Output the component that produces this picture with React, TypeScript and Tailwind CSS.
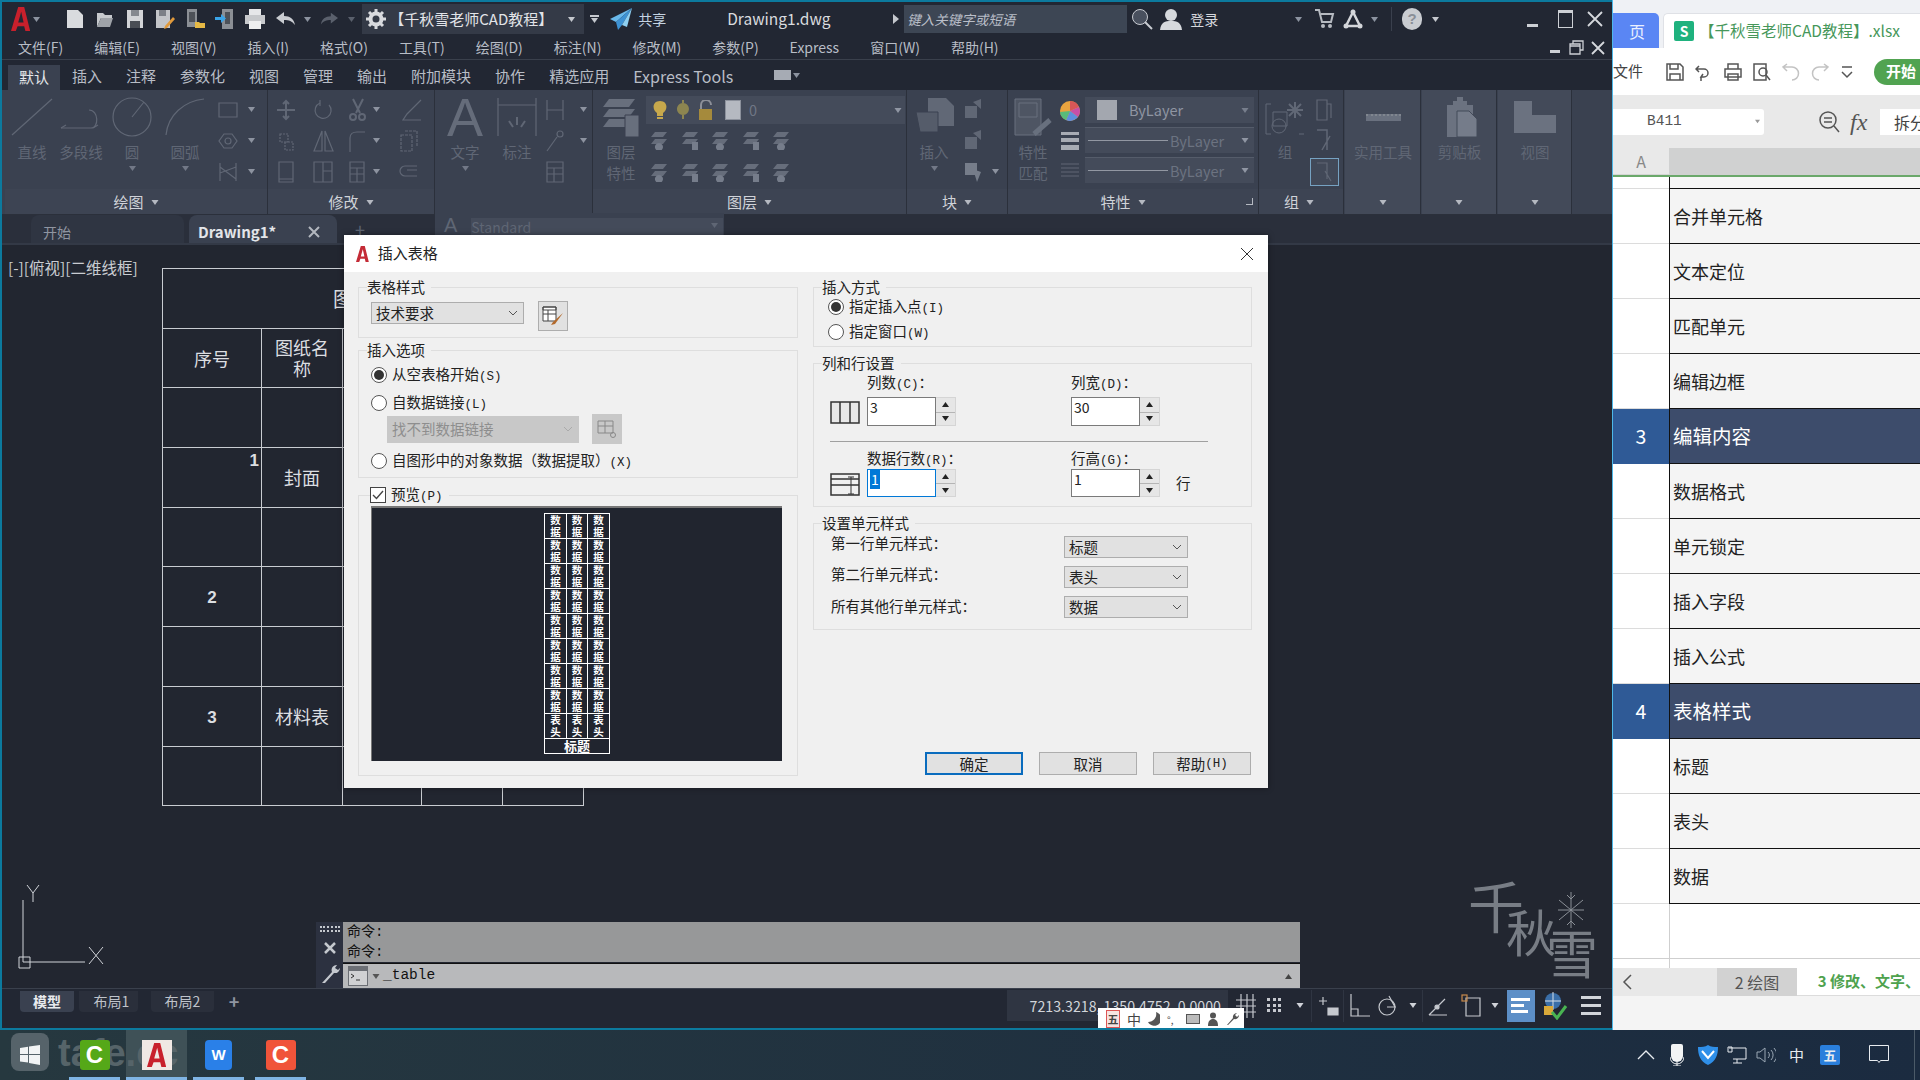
import React from 'react';

const mono = "font-['Liberation_Mono',monospace] text-[12.5px]";

// generic svg wrapper, stroke follows the parent text colour
const Ic = ({ w = 20, h = 20, sw = 1.2, fill = 'none', children }: { w?: number; h?: number; sw?: number; fill?: string; children: React.ReactNode }) => (
  <svg width={w} height={h} viewBox={`0 0 ${w} ${h}`} fill={fill} stroke="currentColor" strokeWidth={sw} className="shrink-0">
    {children}
  </svg>
);

const Tri = ({ className = 'text-[#8c93a0]' }: { className?: string }) => (
  <svg width="7" height="5" viewBox="0 0 7 5" className={`shrink-0 ${className}`}><path d="M0 0h7L3.5 5z" fill="currentColor" /></svg>
);

const AutoA = ({ size = 22, color = '#c8202c' }: { size?: number; color?: string }) => (
  <svg width={size * 0.8} height={size} viewBox="0 0 16 20">
    <path d="M6 0h5l5 20h-4l-1-4H5.500L4 20H0zM8.500 4 6 13h4.500z" fill={color} fillRule="evenodd" />
  </svg>
);

const QuickSlot = ({ children }: { children: React.ReactNode }) => (
  <span className="w-[30px] flex items-center justify-center shrink-0">{children}</span>
);

/* ---------- title bar ---------- */
const TitleBar = () => (
  <div className="h-[36px] shrink-0 flex items-center bg-[#222733] border-t-2 border-[#0c7a9e] text-[#d5d8dd] text-[14px] pl-[11px]">
    <AutoA size={24} />
    <span className="ml-[3px]"><Tri /></span>
    <div className="flex items-center ml-[20px]">
      {/* new */}
      <QuickSlot><svg width="18" height="20" viewBox="0 0 18 20"><path d="M1 1h11l5 5v13H1z" fill="#d9dbde" /></svg></QuickSlot>
      {/* open */}
      <QuickSlot><svg width="18" height="20" viewBox="0 0 18 20"><path d="M1 4h6l2 2h7v3H5l-4 9z" fill="#c6c9cd" /><path d="M5 9h12l-3 9H1z" fill="#9ea2a8" /></svg></QuickSlot>
      {/* save */}
      <QuickSlot><svg width="18" height="20" viewBox="0 0 18 20"><path d="M1 1h16v18H1z" fill="#d3d5d8" /><path d="M5 1h8v6H5z" fill="#85898f" /><path d="M4 12h10v7H4z" fill="#4a4e55" /></svg></QuickSlot>
      <QuickSlot><svg width="20" height="20" viewBox="0 0 20 20"><path d="M1 1h14v18H1z" fill="#c3c5c9" /><path d="M4 1h7v6H4z" fill="#7c8087" /><path d="M18 8l2 2-8 9-3 1 1-3z" fill="#e19a3c" /></svg></QuickSlot>
      <QuickSlot><svg width="20" height="22" viewBox="0 0 20 22"><path d="M2 1h10v18H2z" fill="#8b8f95" /><path d="M4 4h6v10H4z" fill="#4d5158" /><path d="M10 14h4l1 1h5v5H10z" fill="#e6b945" /></svg></QuickSlot>
      <QuickSlot><svg width="20" height="22" viewBox="0 0 20 22"><path d="M7 1h11v20H7z" fill="#8b8f95" /><path d="M10 4h5v12h-5z" fill="#4d5158" /><path d="M0 9h6V6l5 4.500-5 4.500v-3H0z" fill="#3aa4e8" /></svg></QuickSlot>
      <QuickSlot><svg width="22" height="22" viewBox="0 0 22 22"><path d="M5 1h12v6H5z" fill="#e6e7e9" /><path d="M1 7h20v9H1z" fill="#c7c9cc" /><path d="M5 13h12v8H5z" fill="#eeeff0" /></svg></QuickSlot>
      <svg width="20" height="14" viewBox="0 0 20 14" className="ml-[6px]"><path d="M8 0 0 6l8 6V8c5 0 8 1 11 5-1-6-5-9-11-9z" fill="#c9ccd1" /></svg>
      <span className="ml-[8px]"><Tri /></span>
      <svg width="18" height="14" viewBox="0 0 20 14" className="ml-[9px]"><path d="M12 0l8 6-8 6V8C7 8 4 9 1 13c1-6 5-9 11-9z" fill="#5a606c" /></svg>
      <span className="ml-[10px]"><Tri className="text-[#5a606c]" /></span>
    </div>
    <div className="ml-[7px] w-[222px] h-[30px] bg-[#343a47] flex items-center pl-[4px] gap-[6px] text-[#e2e4e8] text-[15px] whitespace-nowrap">
      <svg width="20" height="20" viewBox="0 0 20 20" className="shrink-0"><circle cx="10" cy="10" r="5.500" fill="none" stroke="#d8dade" strokeWidth="4" /><path d="M10 0v4M10 16v4M0 10h4M16 10h4M3 3l3 3M14 14l3 3M17 3l-3 3M6 14l-3 3" stroke="#d8dade" strokeWidth="3" /></svg>
      <span className="w-[172px] -ml-[3px]">【千秋雪老师CAD教程】</span>
      <Tri className="text-[#c5c8ce] w-[9px]" />
    </div>
    <span className="ml-[6px] flex flex-col items-center gap-[1px]"><span className="w-[9px] h-[2px] bg-[#c5c8ce]" /><Tri className="text-[#c5c8ce]" /></span>
    <svg width="22" height="24" viewBox="0 0 22 24" className="ml-[11px]"><path d="M22 1 0 12l6 3z" fill="#69b8ea" /><path d="M22 1 6 15l2 8 4-5z" fill="#3d92d4" /><path d="M22 1 12 18l5 2z" fill="#8fd0f2" /></svg>
    <span className="ml-[6px] text-[#c4d3e2] w-[30px] whitespace-nowrap">共享</span>
    <span className="ml-[59px] text-[15.500px] text-[#d9dbdf] whitespace-nowrap w-[105px]">Drawing1.dwg</span>
    <svg width="6" height="10" viewBox="0 0 6 10" className="ml-[61px] text-[#c5c8ce]"><path d="M0 0l6 5-6 5z" fill="currentColor" /></svg>
    <div className="ml-[5px] w-[223px] h-[28px] bg-[#3d4654] flex items-center pl-[3px] italic text-[#b9bec8] text-[13.500px]">键入关键字或短语</div>
    <svg width="22" height="22" viewBox="0 0 22 22" className="ml-[4px] text-[#c9ccd2]"><circle cx="9" cy="9" r="7.500" fill="#49505e" stroke="currentColor" /><path d="M14 14l7 7" stroke="currentColor" strokeWidth="2" /></svg>
    <svg width="22" height="22" viewBox="0 0 22 22" className="ml-[7px]"><circle cx="11" cy="7" r="6" fill="#d6d9dd" /><path d="M0 22c1-8 5-9 11-9s10 1 11 9z" fill="#d6d9dd" /></svg>
    <span className="ml-[8px] w-[31px] text-[#d7d9de] whitespace-nowrap">登录</span>
    <span className="ml-[74px]"><Tri /></span>
    <svg width="20" height="22" viewBox="0 0 20 22" className="ml-[13px]"><path d="M0 2h4l3 12h9l2-8H6" fill="none" stroke="#b6bac1" strokeWidth="2" /><circle cx="8" cy="18" r="2" fill="#b6bac1" /><circle cx="15" cy="18" r="2" fill="#b6bac1" /></svg>
    <svg width="22" height="22" viewBox="0 0 22 22" className="ml-[7px] text-[#d4d6da]"><path d="M11 4 4 18h14z" fill="none" stroke="currentColor" strokeWidth="2.500" /><circle cx="11" cy="4" r="2.500" fill="currentColor" /><circle cx="4" cy="18" r="2.500" fill="currentColor" /><circle cx="18" cy="18" r="2.500" fill="currentColor" /></svg>
    <span className="ml-[7px]"><Tri /></span>
    <span className="ml-[13px] w-px h-[24px] bg-[#3a404d]" />
    <span className="ml-[10px] w-[20px] h-[22px] rounded-full bg-[#c9ccd1] text-[#8a8f98] flex items-center justify-center font-['Liberation_Sans',sans-serif] text-[15px] font-bold">?</span>
    <span className="ml-[10px]"><Tri className="text-[#c5c8ce]" /></span>
    <span className="ml-[88px] w-[11px] h-[3px] bg-[#cdd0d5] self-end mb-[9px]" />
    <span className="ml-[20px] w-[15px] h-[18px] border border-[#cdd0d5] border-t-[3px]" />
    <svg width="16" height="16" viewBox="0 0 16 16" className="ml-[14px] text-[#d5d8dd]"><path d="M1 1l14 14M15 1 1 15" stroke="currentColor" strokeWidth="1.800" /></svg>
  </div>
);

/* ---------- menu + ribbon tabs ---------- */
const menus = ['文件(F)', '编辑(E)', '视图(V)', '插入(I)', '格式(O)', '工具(T)', '绘图(D)', '标注(N)', '修改(M)', '参数(P)', 'Express', '窗口(W)', '帮助(H)'];

const MenuBar = () => (
  <div className="h-[24px] shrink-0 flex items-center bg-[#222733] border-b border-[#3a404c] text-[#b8bdc6] text-[14px]">
    <div className="flex items-center gap-[31px] pl-[18px] w-[1540px]">
      {menus.map(m => <span key={m} className="whitespace-nowrap">{m}</span>)}
    </div>
    <span className="w-[10px] h-[3px] bg-[#cdd0d5] ml-[10px] self-end mb-[6px]" />
    <svg width="15" height="15" viewBox="0 0 15 15" className="ml-[9px] text-[#cdd0d5]"><path d="M4 4V1h10v9h-3M1 4h10v10H1zM1 6h10" fill="none" stroke="currentColor" strokeWidth="1.300" /></svg>
    <svg width="14" height="14" viewBox="0 0 14 14" className="ml-[7px] text-[#d5d8dd]"><path d="M1 1l12 12M13 1 1 13" stroke="currentColor" strokeWidth="1.800" /></svg>
  </div>
);

const ribbonTabs = ['插入', '注释', '参数化', '视图', '管理', '输出', '附加模块', '协作', '精选应用'];

const RibbonTabs = () => (
  <div className="h-[30px] shrink-0 flex items-stretch bg-[#222733] text-[#b8bdc6] text-[15px] pl-[8px]">
    <span className="w-[52px] mt-[5px] bg-[#3a4150] text-[#e6e8eb] flex items-center justify-center">默认</span>
    <div className="flex items-center gap-[24px] ml-[12px] pt-[2px]">
      {ribbonTabs.map(t => <span key={t} className="whitespace-nowrap">{t}</span>)}
      <span className="whitespace-nowrap text-[16px]">Express Tools</span>
    </div>
    <div className="flex items-center gap-[2px] ml-[41px]">
      <span className="w-[17px] h-[10px] bg-[#a6abb4]" />
      <Tri />
    </div>
  </div>
);

/* ---------- ribbon ---------- */
const Panel = ({ w, title, launcher, lit, noCaption, capPad = 0, children }: { w: number; title?: string; launcher?: boolean; lit?: boolean; noCaption?: boolean; capPad?: number; children: React.ReactNode }) => (
  <div className={`shrink-0 flex flex-col border-r border-[#2b303b] ${lit ? 'bg-[#434a59]' : ''}`} style={{ width: w }}>
    <div className="h-[100px] flex text-[#606775] text-[14.500px] leading-[16px]">{children}</div>
    <div className={`h-[25px] pt-[2px] flex items-center justify-center gap-[7px] text-[#d0d3d9] text-[15px] ${lit || noCaption ? '' : 'bg-[#3d4453]'} relative`} style={{ paddingRight: capPad }}>
      {title && <span>{title}</span>}
      {!noCaption && <Tri className="text-[#b5b9c1] w-[8px]" />}
      {launcher && <span className="absolute right-[5px] top-[9px] w-[7px] h-[7px] border-r border-b border-[#b5b9c1]" />}
    </div>
  </div>
);

const Big = ({ w, label, label2, arrow, ml = 0, children }: { w: number; label?: string; label2?: string; arrow?: boolean; ml?: number; children: React.ReactNode }) => (
  <div className="flex flex-col items-center pt-[7px] shrink-0" style={{ width: w, marginLeft: ml }}>
    <div className="h-[40px] flex items-center justify-center">{children}</div>
    {label && <span className="mt-[7px] whitespace-nowrap">{label}</span>}
    {label2 && <span className="mt-[5px] whitespace-nowrap">{label2}</span>}
    {arrow && <span className="mt-[6px]"><Tri className="text-[#727887]" /></span>}
  </div>
);

// column of three small tools, 31px apart
const Mini = ({ w, ml = 0, arrows = [], items }: { w: number; ml?: number; arrows?: boolean[]; items: React.ReactNode[] }) => (
  <div className="flex flex-col pt-[4px] shrink-0" style={{ width: w, marginLeft: ml }}>
    {items.map((it, i) => (
      <div key={i} className="h-[31px] flex items-center justify-between">
        {it}
        {arrows[i] && <Tri className="text-[#8d93a0]" />}
      </div>
    ))}
  </div>
);

const Ribbon = () => (
  <div className="h-[125px] shrink-0 flex bg-[#3a4150] pl-[5px] border-b border-[#2b303b]">
    <Panel w={263} title="绘图">
      <Big w={54} label="直线"><Ic w={44} h={40}><path d="M2 38 42 2" /></Ic></Big>
      <Big w={44} label="多段线"><Ic w={44} h={30}><path d="M2 26h30c8 0 8-18-2-18" /><path d="M2 26l5-3M34 26l5-3" /></Ic></Big>
      <Big w={58} label="圆" arrow><Ic w={42} h={40}><circle cx="21" cy="20" r="19" /><path d="M21 20 33 5" /></Ic></Big>
      <Big w={48} label="圆弧" arrow><Ic w={42} h={40}><path d="M2 38C4 18 20 4 40 2" /></Ic></Big>
      <Mini w={38} ml={8} arrows={[true, true, true]} items={[
        <Ic w={22} h={20}><path d="M2 3h18v14H2z" /></Ic>,
        <Ic w={22} h={20}><path d="M7 3h8l5 7-5 7H7l-5-7z" /><circle cx="11" cy="10" r="3" /></Ic>,
        <Ic w={22} h={22}><path d="M3 2v18M19 2v18M3 6l16 12M3 12l16-6" /></Ic>,
      ]} />
    </Panel>
    <Panel w={167} title="修改">
      <div className="ml-[8px]"><Mini w={22} items={[
        <Ic w={20} h={22} sw={2}><path d="M10 2v18M1 11h18M7 5l3-3 3 3M7 17l3 3 3-3" /></Ic>,
        <Ic w={20} h={22}><path d="M4 4h8v8H4zM9 12h8v8H9z" strokeDasharray="2 1" /></Ic>,
        <Ic w={20} h={26}><path d="M3 3h14v20H3zM3 20h14" /></Ic>,
      ]} /></div>
      <div className="ml-[14px]"><Mini w={22} items={[
        <Ic w={22} h={22}><path d="M17 6a8 8 0 1 1-9-2" /><path d="M8 1v6" /></Ic>,
        <Ic w={22} h={24}><path d="M10 2v20H2zM13 2v20h8z" /></Ic>,
        <Ic w={22} h={24}><path d="M2 2h18v20H2zM11 2v20M11 11h9" /></Ic>,
      ]} /></div>
      <div className="ml-[14px]"><Mini w={32} arrows={[true, true, true]} items={[
        <Ic w={20} h={24} sw={2}><path d="M5 1l7 14M15 1 8 15" /><circle cx="5" cy="19" r="3" /><circle cx="14" cy="19" r="3" /></Ic>,
        <Ic w={18} h={22}><path d="M2 22V8c0-4 3-6 7-6h8" /></Ic>,
        <Ic w={20} h={24}><path d="M2 2h14v20H2zM2 8h14M2 14h14M9 8v14" /></Ic>,
      ]} /></div>
      <div className="ml-[19px]"><Mini w={24} items={[
        <Ic w={24} h={24}><path d="M22 2 8 16l-4 6h18" /></Ic>,
        <Ic w={20} h={24}><path d="M2 6h11v16H2zM6 2h12v16" strokeDasharray="3 1" /></Ic>,
        <Ic w={20} h={16}><path d="M18 2H6a5 5 0 0 0 0 10h12M18 6H8" /></Ic>,
      ]} /></div>
    </Panel>
    {/* annotation panel is the expanded one, it has no caption */}
    <Panel w={158} noCaption>
      <Big w={52} ml={4} label="文字" arrow><span className="text-[#656c7a] text-[54px] leading-[40px] font-['Liberation_Sans',sans-serif]">A</span></Big>
      <Big w={44} ml={4} label="标注"><Ic w={40} h={40}><path d="M1 1v38M39 1v38M1 8h38M3 8h34" /><path d="M20 20v8M12 24l4 6M28 24l-4 6" strokeWidth="2" /></Ic></Big>
      <Mini w={42} ml={6} arrows={[true, true, false]} items={[
        <Ic w={20} h={24}><path d="M2 2v20M18 2v20M2 12h16" /></Ic>,
        <Ic w={20} h={24}><path d="M2 22 12 8" /><circle cx="15" cy="5" r="3" /></Ic>,
        <Ic w={20} h={24}><path d="M2 2h16v20H2zM2 8h16M2 14h16M9 8v14" /></Ic>,
      ]} />
    </Panel>
    <Panel w={314} title="图层">
      <Big w={46} ml={5} label="图层" label2="特性">
        <svg width="40" height="40" viewBox="0 0 40 40" fill="#686f7d"><path d="M8 2h26l-6 8H2zM8 12h26l-6 8H2zM8 22h26l-6 8H2z" /><path d="M24 18h14v22H24z" stroke="#3a4150" /></svg>
      </Big>
      <div className="flex flex-col ml-[2px]">
        <div className="mt-[6px] h-[28px] w-[259px] bg-[#444b5a] flex items-center pl-[7px] gap-[8.500px] pr-[3px]">
          <Ic w={14} h={20} sw={0} fill="#c7a84c"><path d="M7 1c8 0 8 9 3 12v3H4v-3C-1 10-1 1 7 1zM4 17h6v2H4z" /></Ic>
          <Ic w={14} h={20} sw={0} fill="#8c8550"><path d="M7 3a6 6 0 1 1-.1 0zM6 0h2v3H6zM6 15h2v4H6z" /></Ic>
          <Ic w={18} h={20} sw={0} fill="#a58a3c"><path d="M1 9h13v11H1z" /><path d="M4 9V5a4 4 0 0 1 8 0h2a6 6 0 0 0-12 0v4z" fill="#8d9099" /></Ic>
          <span className="w-[16px] h-[20px] bg-[#b5b9c1] border border-[#8c919c]" />
          <span className="text-[#707785] flex-1">0</span>
          <Tri className="text-[#9096a3] w-[8px]" />
        </div>
        {[0, 1].map(r => (
          <div key={r} className={`flex gap-[10.500px] pl-[3px] ${r ? 'mt-[12px]' : 'mt-[6px]'}`}>
            {[0, 1, 2, 3, 4].map(i => (
              <Ic key={i} w={20} h={20} sw={0} fill="#666d7b">
                <path d="M6 2h12l-4 5H2zM6 9h12l-4 5H2z" />
                <path d={i % 2 ? 'M12 12h6v8h-6z' : 'M10 13a4 4 0 1 1-.1 0z'} fill="#767d8b" />
              </Ic>
            ))}
          </div>
        ))}
      </div>
    </Panel>
    <Panel w={101} title="块">
      <Big w={44} ml={5} label="插入" arrow>
        <svg width="40" height="38" viewBox="0 0 40 38" fill="#616876"><path d="M14 0h18l8 8v20H14z" /><path d="M2 14h22v20H6z" fill="#555c6a" stroke="#3a4150" /></svg>
      </Big>
      <Mini w={36} ml={7} arrows={[false, false, true]} items={[
        <Ic w={20} h={24} sw={0} fill="#606775"><path d="M2 8h12v12H2zM10 4l8-3v10z" /></Ic>,
        <Ic w={20} h={24} sw={0} fill="#606775"><path d="M2 8h12v12H2zM10 4l8-3v10z" /></Ic>,
        <Ic w={20} h={26} sw={0} fill="#767d8a"><path d="M2 4h12v12H2zM10 10l8 3-4 10z" /></Ic>,
      ]} />
    </Panel>
    <Panel w={251} title="特性" launcher capPad={20}>
      <Big w={44} ml={3} label="特性" label2="匹配">
        <svg width="38" height="38" viewBox="0 0 38 38" fill="none" stroke="#68707e"><path d="M1 1h26v36H1z" fill="#4e5563" /><path d="M5 5h18v14H5z" /><path d="M20 36 36 22" strokeWidth="5" /></svg>
      </Big>
      <div className="flex flex-col items-center w-[30px] mt-[11px] gap-[10px]">
        <svg width="20" height="20" viewBox="0 0 20 20"><circle cx="10" cy="10" r="10" fill="#e9a33f" /><path d="M10 10V0a10 10 0 0 1 9 6z" fill="#d95757" /><path d="M10 10l9-4a10 10 0 0 1-1 10z" fill="#c74fa8" /><path d="M10 10l8 6a10 10 0 0 1-12 3z" fill="#5e8ede" /><path d="M10 10l-4 9A10 10 0 0 1 0 11z" fill="#58bb7a" /></svg>
        <Ic w={20} h={20} sw={0} fill="#a8acb4"><path d="M1 1h18v3H1zM1 7h18v4H1zM1 14h18v5H1z" /></Ic>
        <Ic w={20} h={20} sw={1} ><path d="M1 3h18M1 7h18M1 11h18M1 15h18" /></Ic>
      </div>
      <div className="flex flex-col gap-[4px] mt-[7px] w-[169px]">
        <div className="h-[26px] bg-[#444b5a] flex items-center pl-[12px] pr-[5px] text-[#8f95a2]">
          <span className="w-[20px] h-[20px] bg-[#a3a7af]" />
          <span className="ml-[12px] flex-1">ByLayer</span>
          <Tri className="text-[#777e8c] w-[8px]" />
        </div>
        {[0, 1].map(i => (
          <div key={i} className="h-[26px] bg-[#444b5a] flex items-center pl-[3px] pr-[5px] text-[#6c7381] border-t border-[#555c6a]">
            <span className="w-[80px] h-px bg-[#9297a2]" />
            <span className="ml-[2px] flex-1">ByLayer</span>
            <Tri className="text-[#9096a3] w-[8px]" />
          </div>
        ))}
      </div>
    </Panel>
    <Panel w={85} title="组" capPad={4}>
      <Big w={46} ml={3} label="组">
        <svg width="40" height="38" viewBox="0 0 40 38" fill="none" stroke="#616876"><path d="M6 6H1v30h5M34 36h5" /><path d="M8 14h14v14H8z" /><circle cx="14" cy="28" r="7" /><path d="M30 4v16M22 12h16M24 6l12 12M36 6 24 18" strokeWidth="2" /></svg>
      </Big>
      <div className="flex flex-col items-center mt-[8px] w-[30px] gap-[6px] ml-[1px]">
        <Ic w={20} h={24}><path d="M3 2h10v20H3zM13 6h4v14" /></Ic>
        <Ic w={20} h={24}><path d="M3 2h10v20M16 8 8 22" strokeWidth="1.500" /></Ic>
        <span className="w-[29px] h-[28px] border border-[#76a2c2] flex items-center justify-center bg-[#424958]">
          <Ic w={20} h={22}><path d="M3 2h10v16M17 20 11 10" /></Ic>
        </span>
      </div>
    </Panel>
    <div className="flex gap-px ml-px">
      <Panel w={76} lit>
        <Big w={76} label="实用工具"><span className="w-[35px] h-[7px] bg-[#6a717f] border-t-2 border-dotted border-[#80868f]" /></Big>
      </Panel>
      <Panel w={75} lit>
        <Big w={75} label="剪贴板">
          <svg width="34" height="40" viewBox="0 0 34 40" fill="#6b7280"><path d="M10 4h4V0h6v4h4v4h6v24H14v8H4V8h6z" /><path d="M14 14h12l8 8v18H14z" fill="#757c8a" stroke="#434a59" /></svg>
        </Big>
      </Panel>
      <Panel w={74} lit>
        <Big w={74} label="视图">
          <svg width="42" height="32" viewBox="0 0 42 32" fill="#6b7280"><path d="M0 0h18v14h24v18H0z" /></svg>
        </Big>
      </Panel>
    </div>
  </div>
);

/* ---------- drawing tabs ---------- */
const DocTabs = () => (
  <div className="h-[30px] shrink-0 flex items-stretch bg-[#2a2f3b] border-b-2 border-[#333946] text-[14px] pl-[31px]">
    <div className="w-[153px] bg-[#2f3542] rounded-t-[8px] flex items-center pl-[12px] pt-[6px] text-[#8f95a1]">开始</div>
    <div className="w-[148px] ml-[5px] bg-[#3a4150] rounded-t-[8px] flex items-center pl-[9px] pt-[6px] text-[#e3e5e9] font-bold text-[15px]">
      <span className="w-[110px]">Drawing1*</span>
      <svg width="12" height="12" viewBox="0 0 12 12" className="text-[#b3b7bf]"><path d="M1 1l10 10M11 1 1 11" stroke="currentColor" strokeWidth="2" /></svg>
    </div>
    <span className="ml-[18px] text-[#5e6573] text-[18px] leading-[28px]">+</span>
  </div>
);

/* ---------- drawing on the canvas ---------- */
const DrawingTable = () => {
  const cell = 'border-r border-b border-[#c9ccd1] flex items-center justify-center';
  const num = "font-['Liberation_Sans',sans-serif] text-[17px] font-bold pt-[2px]";
  const blank = (n: number) => Array.from({ length: n }).map((_, i) => <div key={i} className={cell} />);
  return (
    <div className="absolute left-[162px] top-[268px] w-[423px] grid grid-cols-[99px_81px_79px_81px_81px] grid-rows-[repeat(9,59.700px)] border-l border-t border-[#c9ccd1] text-[#dcdee1] text-[18px] leading-[21px]">
      <div className={`${cell} col-span-5 text-[20px]`}>图纸目录</div>
      <div className={cell}>序号</div>
      <div className={`${cell} text-center`}>图纸名<br />称</div>
      {blank(3)}
      {blank(5)}
      <div className={`${cell} !items-start !justify-end pr-[2px] ${num}`}>1</div>
      <div className={cell}>封面</div>
      {blank(3)}
      {blank(5)}
      <div className={`${cell} ${num}`}>2</div>
      {blank(4)}
      {blank(5)}
      <div className={`${cell} ${num}`}>3</div>
      <div className={cell}>材料表</div>
      {blank(3)}
      {blank(5)}
    </div>
  );
};

/* ---------- dialog ---------- */
const Box = ({ h, legend, mt = 0, pl = 0, legendX = 8, children }: { h: number; legend: React.ReactNode; mt?: number; pl?: number; legendX?: number; children: React.ReactNode }) => (
  <fieldset className="border border-[#dedede] shrink-0" style={{ height: h, marginTop: mt, paddingLeft: pl }}>
    <legend className="pr-[6px] leading-[16px] whitespace-nowrap" style={{ marginLeft: legendX - pl }}>{legend}</legend>
    {children}
  </fieldset>
);

const Radio = ({ on, children }: { on?: boolean; children: React.ReactNode }) => (
  <div className="h-[20px] flex items-center gap-[5px]">
    <span className="w-[16px] h-[16px] rounded-full border border-[#555] bg-white flex items-center justify-center">
      {on && <span className="w-[10px] h-[10px] rounded-full bg-[#333]" />}
    </span>
    <span className="whitespace-nowrap">{children}</span>
  </div>
);

const K = ({ children }: { children: React.ReactNode }) => <span className={mono}>{children}</span>;

const Chevron = ({ className = 'text-[#555]' }: { className?: string }) => (
  <svg width="10" height="6" viewBox="0 0 10 6" className={className}><path d="M1 1l4 4 4-4" fill="none" stroke="currentColor" /></svg>
);

const Select = ({ w, h = 22, disabled, children }: { w: number; h?: number; disabled?: boolean; children: React.ReactNode }) => (
  <div className={`flex items-center justify-between pl-[4px] pr-[5px] border ${disabled ? 'bg-[#c8c8c8] border-[#c8c8c8] text-[#8e8e8e]' : 'bg-[#e1e1e1] border-[#adadad]'}`} style={{ width: w, height: h }}>
    <span>{children}</span>
    <Chevron className={disabled ? 'text-[#aaa]' : 'text-[#555]'} />
  </div>
);

const Spin = ({ value, w = 69, h = 29, active }: { value: string; w?: number; h?: number; active?: boolean }) => (
  <div className="flex">
    <div className={`bg-white border ${active ? 'border-[#0078d7]' : 'border-[#7a7a7a]'} pl-[2px] leading-[18px] text-[14px]`} style={{ width: w, height: h }}>
      {active ? <span className="bg-[#0078d7] text-white px-[1px]">{value}</span> : value}
    </div>
    <div className="w-[20px] flex flex-col gap-[1px] border border-[#d5d5d5] border-l-0 bg-[#e6e6e6]" style={{ height: h }}>
      <span className="flex-1 flex items-center justify-center"><Tri className="text-[#222] rotate-180" /></span>
      <span className="flex-1 flex items-center justify-center border-t border-[#b5b5b5]"><Tri className="text-[#222]" /></span>
    </div>
  </div>
);

const Btn = ({ primary, children }: { primary?: boolean; children: React.ReactNode }) => (
  <div className={`w-[98px] h-[23px] flex items-center justify-center bg-[#e1e1e1] border ${primary ? 'border-2 border-[#0a6cbe]' : 'border-[#adadad]'}`}>{children}</div>
);

const previewRows = ['数据', '数据', '数据', '数据', '数据', '数据', '数据', '数据', '表头'];

const Preview = () => (
  <div className="w-[411px] h-[255px] bg-[#21252f] border-t-2 border-l border-[#777] flex justify-center pt-[5px] ml-[12px] mt-[2px]">
    <div className="w-[66px] h-[241px] border-l border-t border-white text-white text-[10.500px] font-bold leading-[12px] text-center">
      {previewRows.map((r, i) => (
        <div key={i} className="flex h-[25px] border-b border-white">
          {[22, 21, 22].map((w, j) => (
            <div key={j} className="border-r border-white" style={{ width: w }}>{r[0]}<br />{r[1]}</div>
          ))}
        </div>
      ))}
      <div className="h-[15px] border-b border-r border-white text-[13px] leading-[14px]">标题</div>
    </div>
  </div>
);

const cellStyles = [
  { label: '第一行单元样式：', value: '标题', lift: '-mt-[8px]' },
  { label: '第二行单元样式：', value: '表头', lift: '-mt-[6px]' },
  { label: '所有其他行单元样式：', value: '数据', lift: '-mt-[2px]' },
];

const Dialog = () => (
  <div className="absolute left-[344px] top-[235px] w-[924px] h-[553px] flex flex-col bg-[#f0f0f0] text-[#222] text-[14.500px] leading-[18px] shadow-[0_0_6px_rgba(0,0,0,0.4)]">
    <div className="h-[37px] shrink-0 bg-white flex items-center pl-[12px] gap-[9px]">
      <AutoA size={16} color="#c42b36" />
      <span className="text-[15px] -mt-[1px]">插入表格</span>
      <svg width="14" height="14" viewBox="0 0 14 14" className="ml-auto mr-[14px] text-[#333]"><path d="M1 1l12 12M13 1 1 13" stroke="currentColor" strokeWidth="1" /></svg>
    </div>
    <div className="flex-1 flex pl-[14px] pt-[7px] pb-[13px] gap-[15px] min-h-0">
      {/* left column */}
      <div className="w-[440px] flex flex-col">
        <Box h={59} legend="表格样式" pl={12}>
          <div className="flex items-start gap-[14px] pt-[6px]">
            <div className="mt-[1px]"><Select w={153}>技术要求</Select></div>
            <div className="w-[30px] h-[30px] bg-[#e1e1e1] border border-[#adadad] flex items-center justify-center">
              <svg width="22" height="20" viewBox="0 0 22 20"><path d="M1 1h13v14H1z" fill="#fff" stroke="#444" /><path d="M1 1h13v3H1zM1 8h13M6 4v11" fill="none" stroke="#444" /><path d="M21 7 11 16l-2 3 4-1z" fill="#b36a2c" /></svg>
            </div>
          </div>
        </Box>
        <Box h={136} mt={4} legend="插入选项" pl={12}>
          <div className="pt-[7px]"><Radio on>从空表格开始<K>(S)</K></Radio></div>
          <div className="mt-[8px]"><Radio>自数据链接<K>(L)</K></Radio></div>
          <div className="flex items-center gap-[13px] pl-[16px] mt-[1px]">
            <Select w={192} h={27} disabled>找不到数据链接</Select>
            <div className="w-[30px] h-[30px] bg-[#c8c8c8] flex items-center justify-center">
              <svg width="20" height="18" viewBox="0 0 20 18" fill="none" stroke="#888"><path d="M1 1h15v12H1zM1 6h15M8 1v12" /><circle cx="16" cy="15" r="2.500" /></svg>
            </div>
          </div>
          <div className="mt-[7px]"><Radio>自图形中的对象数据（数据提取）<K>(X)</K></Radio></div>
        </Box>
        <Box h={290} mt={8} legendX={11} legend={
          <span className="flex items-center gap-[5px] h-[18px]">
            <span className="w-[16px] h-[16px] border border-[#444] bg-white flex items-center justify-center">
              <svg width="12" height="10" viewBox="0 0 12 10"><path d="M1 5l3.500 3.500L11 1" fill="none" stroke="#444" strokeWidth="1.400" /></svg>
            </span>
            <span>预览<K>(P)</K></span>
          </span>
        }>
          <Preview />
        </Box>
      </div>
      {/* right column */}
      <div className="w-[439px] flex flex-col">
        <Box h={68} legend="插入方式" pl={14}>
          <div className="pt-[2px]"><Radio on>指定插入点<K>(I)</K></Radio></div>
          <div className="mt-[5px]"><Radio>指定窗口<K>(W)</K></Radio></div>
        </Box>
        <Box h={152} mt={8} legend="列和行设置" pl={16}>
          <div className="flex pt-[3px]">
            <svg width="30" height="23" viewBox="0 0 30 23" className="mt-[27px] shrink-0" fill="#e8e8e8" stroke="#333" strokeWidth="1.500"><path d="M1 1h28v21H1zM10 1v21M20 1v21" /></svg>
            <div className="ml-[7px] w-[204px]">
              <div className="h-[16px] leading-[16px]">列数<K>(C)</K>：</div>
              <div className="mt-[7px]"><Spin value="3" /></div>
            </div>
            <div>
              <div className="h-[16px] leading-[16px]">列宽<K>(D)</K>：</div>
              <div className="mt-[7px]"><Spin value="30" /></div>
            </div>
          </div>
          <div className="h-px w-[378px] bg-[#a0a0a0] mt-[15px]" />
          <div className="flex pt-[8px]">
            <svg width="30" height="23" viewBox="0 0 30 23" className="mt-[23px] shrink-0" fill="none" stroke="#333" strokeWidth="1.500"><path d="M1 1h28v21H1zM1 6h28M1 12h28" /><path d="M21 4v17M18 4h6M18 21h6" strokeWidth="1" /></svg>
            <div className="ml-[7px] w-[204px]">
              <div className="h-[16px] leading-[16px]">数据行数<K>(R)</K>：</div>
              <div className="mt-[3px]"><Spin value="1" h={28} active /></div>
            </div>
            <div>
              <div className="h-[16px] leading-[16px]">行高<K>(G)</K>：</div>
              <div className="mt-[3px]"><Spin value="1" h={28} /></div>
            </div>
            <span className="ml-[16px] mt-[24px] h-[18px]">行</span>
          </div>
        </Box>
        <Box h={115} mt={8} legend="设置单元样式" pl={17}>
          <div className="flex flex-col gap-[8px] pt-[5px]">
            {cellStyles.map(s => (
              <div key={s.label} className="flex items-center justify-between w-[357px]">
                <span className={s.lift}>{s.label}</span>
                <Select w={124}>{s.value}</Select>
              </div>
            ))}
          </div>
        </Box>
        <div className="mt-auto flex justify-end gap-[16px] mr-[1px]">
          <Btn primary>确定</Btn>
          <Btn>取消</Btn>
          <Btn>帮助<K>(H)</K></Btn>
        </div>
      </div>
    </div>
  </div>
);

/* ---------- command line, status ---------- */
const CommandLine = () => (
  <div className="absolute left-[316px] top-[922px] w-[984px] h-[66px] flex text-[#111] text-[14px]">
    <div className="w-[27px] bg-[#2c3140] flex flex-col items-center justify-between py-[4px] text-[#c4c8ce]">
      <span className="w-[20px] h-[6px] border-y-2 border-dotted border-[#c4c8ce]" />
      <svg width="12" height="12" viewBox="0 0 12 12"><path d="M1 1l10 10M11 1 1 11" stroke="currentColor" strokeWidth="2.500" /></svg>
      <svg width="20" height="20" viewBox="0 0 20 20"><path d="M2 19 12 8a5 5 0 0 1 5-7l-2 3 3 2 2-2a5 5 0 0 1-6 5L5 19z" fill="currentColor" /></svg>
    </div>
    <div className="flex-1 flex flex-col">
      <div className="h-[40px] bg-[#979899] pl-[4px] leading-[20px] font-['Liberation_Mono','Noto_Sans_CJK_SC',monospace]">
        <div>命令:</div>
        <div>命令:</div>
      </div>
      <div className="flex-1 mt-[1px] bg-[#b8b9bb] border-t border-[#111] flex items-center pl-[5px] pr-[8px]">
        <svg width="20" height="20" viewBox="0 0 20 20"><path d="M0 0h20v20H0z" fill="#6c6f75" /><path d="M1 5h18v14H1z" fill="#d0d1d3" /><path d="M3 8l3 2-3 2M8 14h4" fill="none" stroke="#333" /></svg>
        <Tri className="ml-[4px] text-[#555] w-[8px]" />
        <span className="ml-[3px] font-['Liberation_Mono',monospace] text-[14.500px]">_table</span>
        <Tri className="ml-auto rotate-180 text-[#444]" />
      </div>
    </div>
  </div>
);

const StatusRow = () => (
  <div className="h-[40px] shrink-0 flex items-start bg-[#222733] border-t border-[#3a404c] text-[#bfc3ca]">
    <div className="flex items-center pl-[20px] pt-[2px] text-[14px] text-[#bfc3ca]">
      <span className="w-[54px] h-[21px] bg-[#3a4150] text-[#e8eaed] font-bold flex items-center justify-center rounded-b-[4px]">模型</span>
      <span className="ml-[5px] w-[59px] h-[21px] bg-[#2a2f3b] flex items-center justify-center pl-[6px] rounded-b-[4px]">布局1</span>
      <span className="ml-[13px] w-[63px] h-[21px] bg-[#2a2f3b] flex items-center justify-center rounded-b-[4px]">布局2</span>
      <span className="ml-[12px] w-[16px] text-center text-[18px] font-bold leading-[21px] text-[#8f95a1]">+</span>
    </div>
    <div className="ml-[765px] mt-[1px] w-[221px] h-[31px] bg-[#2f3542] flex items-center justify-end pr-[7px] pt-[2px] text-[14.200px] text-[#d2d5da] whitespace-nowrap">7213.3218, 1350.4752, 0.0000</div>
    <div className="flex items-center h-[33px] ml-[8px] text-[#c5c8ce]">
      <Ic w={20} h={24}><path d="M5 0v24M11 0v24M17 0v24M0 6h20M0 12h20M0 18h20" /></Ic>
      <span className="ml-[11px] w-[15px] h-[15px] grid grid-cols-3 gap-[2px] mr-[2px]">
        {Array.from({ length: 9 }).map((_, i) => <span key={i} className="w-[3px] h-[3px] bg-[#c5c8ce]" />)}
      </span>
      <Tri className="ml-[11px] text-[#d0d3d9] w-[10px]" />
      <span className="ml-[6px] w-px h-[32px] bg-[#2f3542]" />
      <span className="ml-[6px]"><Ic w={22} h={22}><path d="M5 2v8M1 6h8" /><path d="M10 13h10v7H10z" fill="currentColor" /></Ic></span>
      <span className="ml-[3px] w-px h-[32px] bg-[#2f3542]" />
      <span className="ml-[4px]"><Ic w={22} h={24}><path d="M3 0v22h19M3 15h7v7" /></Ic></span>
      <span className="ml-[7px]"><Ic w={22} h={22}><circle cx="10" cy="12" r="8" /><path d="M10 12h8L12 1" /></Ic></span>
      <Tri className="ml-[9px] text-[#d0d3d9] w-[10px]" />
      <span className="ml-[4px] w-px h-[32px] bg-[#2f3542]" />
      <span className="ml-[5px]"><Ic w={22} h={22}><path d="M1 20h18M1 20 17 4" /><circle cx="9" cy="12" r="2" fill="currentColor" /></Ic></span>
      <span className="ml-[11px]"><Ic w={20} h={24}><path d="M5 4h14v18H5z" /><rect x="1" y="1" width="5" height="6" stroke="#c98a4c" /></Ic></span>
      <Tri className="ml-[9px] text-[#d0d3d9] w-[10px]" />
      <span className="ml-[7px] w-[28px] h-[32px] bg-[#5d8fc7] flex flex-col justify-center gap-[3px] px-[4px]">
        <span className="h-[3px] w-[19px] bg-white" /><span className="h-[3px] w-[13px] bg-white" /><span className="h-[3px] w-[17px] bg-white" />
      </span>
      <svg width="26" height="28" viewBox="0 0 26 28" className="ml-[7px]"><circle cx="11" cy="9" r="8" fill="#3a6ea8" /><path d="M11 0v18M3 9h16" stroke="#d6dfe8" /><rect x="2" y="14" width="9" height="9" fill="#d9a93a" /><path d="M10 20l5 6 9-12" fill="none" stroke="#49b452" strokeWidth="3" /></svg>
      <span className="ml-[13px] flex flex-col gap-[5px]">
        <span className="h-[3px] w-[20px] bg-[#d2d5da]" /><span className="h-[3px] w-[20px] bg-[#d2d5da]" /><span className="h-[3px] w-[20px] bg-[#d2d5da]" />
      </span>
    </div>
  </div>
);

// floating IME bar on top of the coordinates
const ImeBar = () => (
  <div className="absolute left-[1098px] top-[1008px] w-[146px] h-[22px] bg-white flex items-center pl-[8px] gap-[7px] text-[#444] text-[13px]">
    <span className="w-[14px] h-[18px] bg-[#f6e3e1] border border-[#d55] flex items-center justify-center text-[11px] font-bold">五</span>
    <span className="text-[14px]">中</span>
    <svg width="12" height="14" viewBox="0 0 12 14"><path d="M8 0a7 7 0 1 1-8 10 8 8 0 0 0 8-10z" fill="#555" /></svg>
    <span className="text-[10px] text-[#555] w-[12px]">°,</span>
    <span className="w-[14px] h-[10px] border border-[#555] bg-[#bbb]" />
    <svg width="12" height="14" viewBox="0 0 12 14" fill="#555"><circle cx="6" cy="3.500" r="3" /><path d="M1 14c0-5 2-7 5-7s5 2 5 7z" /></svg>
    <svg width="14" height="14" viewBox="0 0 14 14"><path d="M1 13 7 6a4 4 0 0 1 4-5l-2 2 2 2 2-2a4 4 0 0 1-5 4l-6 6z" fill="#555" /></svg>
  </div>
);

const Watermark = () => (
  <div className="absolute left-[1470px] top-[880px] w-[130px] h-[100px] text-[#787d85]">
    <span className="absolute -left-[2px] top-[-8px] text-[56px] leading-[64px]">千</span>
    <span className="absolute left-[36px] top-[22px] text-[50px] leading-[56px]">秋</span>
    <span className="absolute left-[76px] top-[44px] text-[52px] leading-[56px]">雪</span>
    <svg width="26" height="36" viewBox="0 0 26 36" className="absolute left-[88px] top-[12px]" stroke="#8b9097" fill="none"><path d="M13 0v36M1 8l24 20M25 8 1 28M0 18h26M9 3l4 4 4-4M9 33l4-4 4 4" /></svg>
  </div>
);

/* ---------- spreadsheet on the right ---------- */
const sheetRows: { text: string; num?: string }[] = [
  { text: '合并单元格' }, { text: '文本定位' }, { text: '匹配单元' }, { text: '编辑边框' },
  { text: '编辑内容', num: '3' }, { text: '数据格式' }, { text: '单元锁定' }, { text: '插入字段' },
  { text: '插入公式' }, { text: '表格样式', num: '4' }, { text: '标题' }, { text: '表头' }, { text: '数据' },
];

const ExcelPane = () => (
  <div className="flex-1 min-w-0 flex flex-col bg-white overflow-hidden border-l border-[#4db8e8] text-[#333]">
    <div className="h-[48px] shrink-0 bg-[#eff1f5] flex items-end">
      <div className="w-[46px] h-[35px] bg-[#5a86f4] rounded-tr-[5px] flex items-center justify-end pr-[14px] text-[#e9efff] text-[16px] whitespace-nowrap">页</div>
      <div className="ml-[4px] flex-1 h-[35px] bg-white rounded-tl-[5px] border-t border-l border-[#dfe1e6] flex items-center pl-[10px] whitespace-nowrap">
        <span className="w-[20px] h-[20px] bg-[#1fb27e] flex items-center justify-center text-white text-[14px] font-bold rounded-[2px]">S</span>
        <span className="ml-[5px] text-[#46975a] text-[15.500px]">【千秋雪老师CAD教程】.xlsx</span>
      </div>
    </div>
    <div className="h-[47px] shrink-0 bg-white flex items-center text-[#555] whitespace-nowrap">
      <span className="w-[30px] text-[15px] text-[#444]">文件</span>
      <span className="w-px h-[30px] bg-[#e3e3e3] ml-[12px]" />
      <div className="flex items-center gap-[11px] ml-[11px]">
        <Ic w={18} h={18} sw={1.500}><path d="M1 1h13l3 3v13H1zM4 1v5h8V1M4 17v-6h10v6" /></Ic>
        <Ic w={18} h={18} sw={1.500}><path d="M1 6h8a4 4 0 1 1 0 8H6l2-3M4 3 1 6l3 3M6 14v4" /></Ic>
        <Ic w={18} h={18} sw={1.500}><path d="M4 6V1h10v5M1 6h16v8H1zM4 11h10v6H4z" /></Ic>
        <Ic w={18} h={18} sw={1.500}><path d="M1 1h12v16H1z" /><circle cx="10" cy="9" r="4" /><path d="M13 12l4 5" /></Ic>
        <span className="text-[#c3c3c3]"><Ic w={18} h={18} sw={1.500}><path d="M5 8 1 4l4-3M1 4h9a6 6 0 0 1 0 13" /></Ic></span>
        <span className="text-[#c3c3c3]"><Ic w={18} h={18} sw={1.500}><path d="M13 8l4-4-4-3M17 4H8a6 6 0 0 0 0 13" /></Ic></span>
        <Ic w={14} h={14} sw={1.500}><path d="M2 2h10M2 7l5 5 5-5" /></Ic>
      </div>
      <span className="w-px h-[30px] bg-[#e3e3e3] ml-[14px]" />
      <span className="ml-[6px] h-[26px] w-[60px] shrink-0 rounded-l-full bg-[#51a351] text-white text-[15px] font-bold flex items-center pl-[12px]">开始</span>
    </div>
    <div className="h-[53px] shrink-0 bg-[#e9e9e9] flex items-center whitespace-nowrap">
      <div className="w-[151px] shrink-0 h-[26px] bg-white rounded-r-[3px] flex items-center pl-[34px] pr-[4px] text-[14.500px] text-[#555] font-['Liberation_Mono',monospace]">
        B411
        <Tri className="ml-auto text-[#999] w-[5px]" />
      </div>
      <svg width="22" height="24" viewBox="0 0 22 24" className="ml-[54px] shrink-0 text-[#555]" fill="none" stroke="currentColor" strokeWidth="1.500"><circle cx="10" cy="10" r="8" /><path d="M6 8h8M6 12h8M16 16l5 6" /></svg>
      <span className="ml-[10px] shrink-0 text-[24px] italic font-['Liberation_Serif',serif] text-[#555] w-[20px]">fx</span>
      <div className="ml-[10px] w-[60px] shrink-0 h-[26px] bg-white pl-[14px] text-[16px] text-[#444] flex items-center">拆分</div>
    </div>
    <div className="h-[29px] shrink-0 flex bg-[#e9e9e9] border-b-2 border-[#6aa86a]">
      <span className="w-[56px] flex items-center justify-center text-[#888] text-[16px] border-b-[1px] border-[#d5d5d5]">A</span>
      <span className="flex-1 bg-[#d0d1d1]" />
    </div>
    <div className="h-[12px] shrink-0 flex">
      <span className="w-[56px] border-b border-[#dcdcdc]" />
      <span className="flex-1 border-l border-b border-[#111] bg-[#f6f6f6]" />
    </div>
    {sheetRows.map(r => (
      <div key={r.text} className={`h-[55px] shrink-0 flex ${r.num ? 'text-white text-[19.500px]' : 'text-[#222] text-[18px]'}`}>
        <span className={`w-[56px] flex items-center justify-center border-b ${r.num ? 'bg-[#2f5a96] border-[#2f5a96]' : 'border-[#dcdcdc]'}`}>{r.num}</span>
        <span className={`flex-1 flex items-center pl-[3px] border-l border-b border-[#111] ${r.num ? 'bg-[#3d4c6b]' : 'bg-[#f4f4f4]'}`}>{r.text}</span>
      </div>
    ))}
    <div className="h-[55px] shrink-0 flex border-b border-[#cfcfcf]"><span className="w-[56px]" /><span className="flex-1 border-l border-[#cfcfcf]" /></div>
    <div className="h-[9px] shrink-0 flex"><span className="w-[56px]" /><span className="flex-1 border-l border-[#cfcfcf]" /></div>
    <div className="h-[28px] shrink-0 flex items-stretch text-[15px] whitespace-nowrap">
      <div className="w-[105px] bg-[#e8e8e8] flex items-center pl-[9px]">
        <svg width="10" height="16" viewBox="0 0 10 16" className="text-[#555]"><path d="M9 1 2 8l7 7" fill="none" stroke="currentColor" strokeWidth="1.500" /></svg>
      </div>
      <div className="w-[80px] bg-[#d2d2d2] flex items-center justify-center text-[#555] text-[16px]">2 绘图</div>
      <div className="flex-1 flex items-center pl-[21px] text-[#4ea24e] font-bold border-b border-[#dcdcdc]">3 修改、文字、</div>
    </div>
    <div className="flex-1 bg-[#f4f4f4]" />
  </div>
);

/* ---------- windows taskbar ---------- */
const Taskbar = () => (
  <div className="h-[50px] shrink-0 flex items-stretch bg-linear-to-r from-[#26383f] to-[#1b2b40] relative text-white">
    <div className="w-[69px] flex items-center justify-center pr-[9px] relative z-10">
      <svg width="20" height="20" viewBox="0 0 20 20" fill="#f2f4f5"><path d="M0 3l8-1.200V9H0zM9 1.600 20 0v9H9zM0 10h8v7.500L0 16.500zM9 10h11v10L9 18z" /></svg>
    </div>
    <div className="w-[51px] relative flex items-center justify-center z-10">
      <span className="w-[30px] h-[30px] bg-[#55a818] rounded-[3px] flex items-center justify-center text-white text-[24px] font-bold font-['Liberation_Sans',sans-serif]">C</span>
      <span className="absolute inset-x-0 bottom-0 h-[3px] bg-[#7fb4e4]" />
    </div>
    <div className="ml-[6px] w-[61px] bg-[#3f5157] relative flex items-center justify-center pb-[1px]">
      <span className="relative z-10 w-[30px] h-[30px] bg-[#f0e8e4] flex items-center justify-center"><AutoA size={24} /></span>
      <span className="absolute inset-x-0 bottom-0 h-[3px] bg-[#7fb4e4]" />
    </div>
    {/* faint site mark, the icons sit over it */}
    <span className="absolute left-[11px] top-[3px] w-[38px] h-[38px] rounded-[8px] bg-[#56636a]" />
    <span className="absolute left-[58px] top-[1px] text-[38px] leading-[44px] font-bold text-[#566469] font-['Liberation_Sans',sans-serif] whitespace-nowrap">tafe.cc</span>
    <div className="ml-[6px] w-[51px] relative flex items-center justify-center">
      <span className="w-[27px] h-[30px] bg-[#2a80e8] rounded-[4px] flex items-center justify-center text-white text-[15px] font-bold font-['Liberation_Sans',sans-serif]">W</span>
      <span className="absolute inset-x-0 bottom-0 h-[3px] bg-[#7fb4e4]" />
    </div>
    <div className="ml-[11px] w-[51px] relative flex items-center justify-center">
      <span className="w-[30px] h-[30px] bg-[#f0543a] rounded-[3px] flex items-center justify-center text-white text-[24px] font-bold font-['Liberation_Sans',sans-serif]">C</span>
      <span className="absolute inset-x-0 bottom-0 h-[3px] bg-[#7fb4e4]" />
    </div>
    <div className="ml-auto flex items-center text-[#e8ecf0]">
      <svg width="18" height="10" viewBox="0 0 18 10"><path d="M1 9l8-8 8 8" fill="none" stroke="currentColor" strokeWidth="1.300" /></svg>
      <svg width="14" height="22" viewBox="0 0 14 22" className="ml-[15px]"><path d="M3 0h8a2 2 0 0 1 2 2v10a6 6 0 0 1-12 0V2a2 2 0 0 1 2-2z" fill="#f2f4f5" /><path d="M0 13a7 7 0 0 0 14 0M7 18v4M3 22h8" fill="none" stroke="#f2f4f5" /></svg>
      <svg width="20" height="20" viewBox="0 0 20 20" className="ml-[14px]"><path d="M10 0c3 2 6 2 10 2 0 8-2 14-10 18C2 16 0 10 0 2c4 0 7 0 10-2z" fill="#2f8fe8" /><path d="M4 6l6 7 6-7" fill="none" stroke="#fff" strokeWidth="2" /></svg>
      <svg width="20" height="18" viewBox="0 0 20 18" className="ml-[9px]" fill="none" stroke="currentColor"><path d="M2 2h17v11H6M1 1h4v5H1zM10 13v4M6 17h9" /></svg>
      <svg width="20" height="16" viewBox="0 0 20 16" className="ml-[9px] text-[#9aa7b4]" fill="none" stroke="currentColor"><path d="M1 5h3l5-4v14l-5-4H1zM12 5a4 4 0 0 1 0 6M15 3a7 7 0 0 1 0 10M18 1a10 10 0 0 1 0 14" /></svg>
      <span className="ml-[13px] text-[15px] w-[16px]">中</span>
      <span className="ml-[15px] w-[20px] h-[20px] bg-[#2a7fdc] rounded-[2px] flex items-center justify-center text-[13px] font-bold">五</span>
      <svg width="20" height="20" viewBox="0 0 20 20" className="ml-[29px]" fill="none" stroke="currentColor"><path d="M.5.5h19v15h-8l-1.500 2-1.500-2h-8z" /></svg>
      <span className="ml-[25px] mr-[5px] w-px h-[50px] bg-[#4b5a68]" />
    </div>
  </div>
);

export default function App() {
  return (
    <div className="w-[1920px] h-[1080px] flex flex-col overflow-hidden bg-[#222630] font-['Noto_Sans_CJK_SC','Liberation_Sans',sans-serif]">
      <div className="flex-1 min-h-0 flex">
        {/* CAD window */}
        <div className="w-[1612px] shrink-0 relative flex flex-col bg-[#222630] border-b-2 border-[#0c7a9e] overflow-hidden">
          <TitleBar />
          <MenuBar />
          <RibbonTabs />
          <Ribbon />
          <DocTabs />
          <div className="flex-1 relative">
            <div className="pl-[8px] pt-[12px] text-[#c9ccd1] text-[15.500px] leading-[20px]">[-][俯视][二维线框]</div>
            {/* UCS icon */}
            <svg width="90" height="95" viewBox="0 0 90 95" className="absolute left-[17px] top-[638px] text-[#d0d3d8]" fill="none" stroke="currentColor">
              <path d="M6 17v62M6 79h62M2 74h11v11H2zM10 2l6 8 6-8M16 10v9M72 64l14 17M86 64 72 81" />
            </svg>
          </div>
          <StatusRow />
          <DrawingTable />
          <Watermark />
          {/* expanded annotation panel peeking behind the dialog */}
          <div className="absolute left-[435px] top-[213px] w-[289px] h-[24px] bg-[#3a4150] flex items-center pl-[9px] text-[#5f6674] text-[14px]">
            <span className="text-[20px] mr-[14px] font-['Liberation_Sans',sans-serif]">A</span>
            <span className="flex-1 h-[18px] mt-[4px] bg-[#444b5a] flex items-center leading-none">Standard</span>
            <Tri className="ml-[-12px] mr-[6px]" />
          </div>
          <CommandLine />
          <ImeBar />
          <Dialog />
          {/* window edge */}
          <span className="absolute left-0 inset-y-0 w-[2px] bg-[#0c7a9e]" />
        </div>
        <ExcelPane />
      </div>
      <Taskbar />
    </div>
  );
}
